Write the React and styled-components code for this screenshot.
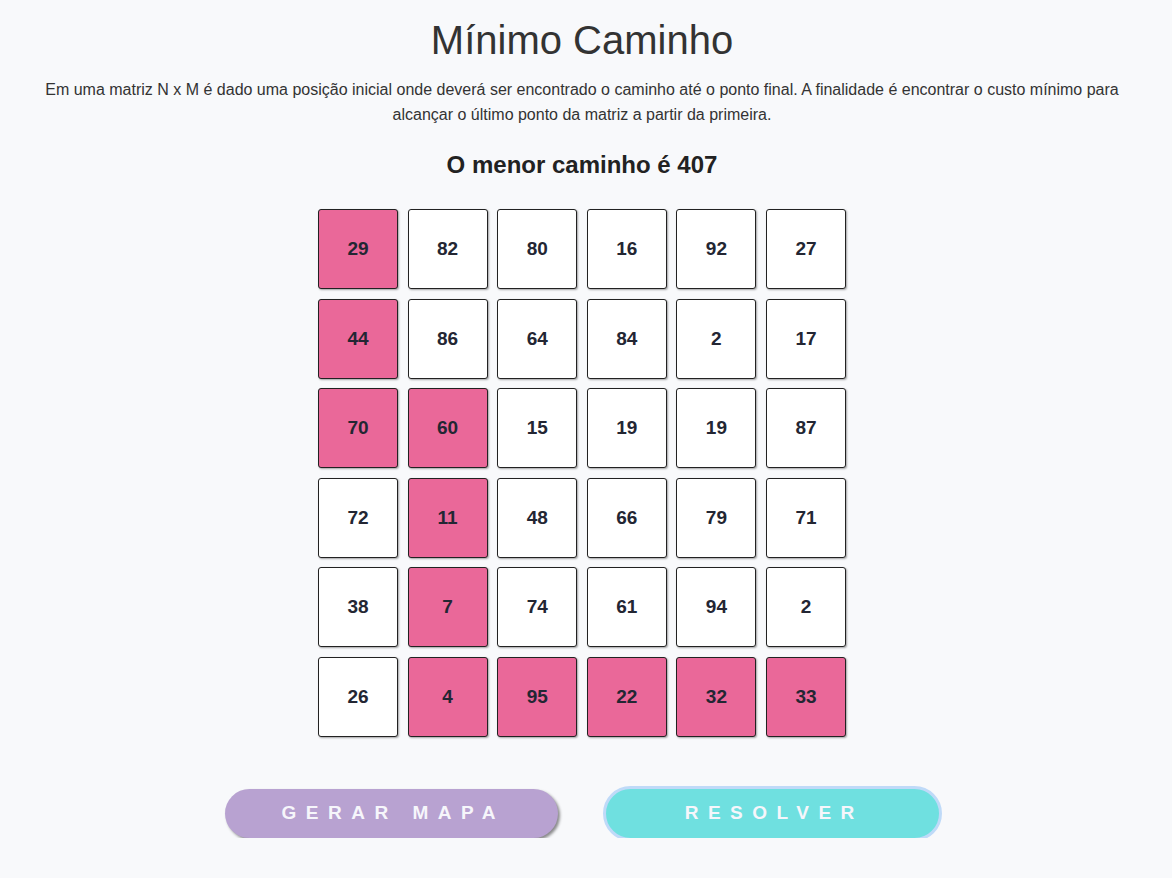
import React from 'react';
import styled, { createGlobalStyle } from 'styled-components';

const GlobalStyle = createGlobalStyle`
  html, body {
    margin: 0;
    padding: 0;
    background-color: #f8f9fb;
  }
  body {
    font-family: 'Liberation Sans', Arial, sans-serif;
    color: #333;
  }
`;

const Page = styled.div`
  width: 1164px;
  display: flex;
  flex-direction: column;
  align-items: center;
  padding-top: 14px;
`;

const Title = styled.h1`
  font-size: 40px;
  font-weight: 400;
  color: #333;
  margin: 0;
  line-height: 52px;
`;

const Description = styled.p`
  font-size: 16px;
  line-height: 25px;
  color: #333;
  text-align: center;
  margin: 11px 0 0;
  padding: 0 40px;
`;

const Result = styled.h2`
  font-size: 24px;
  font-weight: 700;
  color: #222;
  margin: 23px 0 0;
  line-height: 30px;
`;

const Grid = styled.div`
  display: grid;
  grid-template-columns: repeat(6, 80px);
  gap: 9.6px;
  margin-top: 29px;
`;

const Cell = styled.div`
  box-sizing: border-box;
  width: 80px;
  height: 80px;
  display: flex;
  align-items: center;
  justify-content: center;
  border: 1px solid #222;
  border-radius: 3px;
  background-color: ${(props) => (props.$path ? '#ea6899' : '#fff')};
  box-shadow: 1px 1px 2px rgba(0, 0, 0, 0.35);
  font-size: 19px;
  font-weight: 700;
  color: #232633;
`;

const Actions = styled.div`
  display: flex;
  gap: 48px;
  margin-top: 52px;
`;

const Button = styled.button`
  box-sizing: border-box;
  width: ${(props) => (props.$focused ? '339px' : '333px')};
  height: ${(props) => (props.$focused ? '55px' : '49px')};
  margin: ${(props) => (props.$focused ? '-3px' : '0')};
  border-radius: 30px;
  border: ${(props) => (props.$focused ? '3px solid #bfdaf8' : 'none')};
  background-color: ${(props) => props.$bg};
  box-shadow: ${(props) => (props.$focused ? 'none' : '2px 2px 3px rgba(0, 0, 0, 0.45)')};
  color: #f6f6fb;
  font-family: 'Liberation Sans', Arial, sans-serif;
  font-size: 19px;
  font-weight: 700;
  letter-spacing: 0.5em;
  padding-left: 0.5em;
  cursor: pointer;
`;

const matrix = [
  [29, 82, 80, 16, 92, 27],
  [44, 86, 64, 84, 2, 17],
  [70, 60, 15, 19, 19, 87],
  [72, 11, 48, 66, 79, 71],
  [38, 7, 74, 61, 94, 2],
  [26, 4, 95, 22, 32, 33],
];

const path = new Set(['0-0', '1-0', '2-0', '2-1', '3-1', '4-1', '5-1', '5-2', '5-3', '5-4', '5-5']);

const App = () => {
  const total = 407;

  return (
    <>
      <GlobalStyle />
      <Page>
        <Title>Mínimo Caminho</Title>
        <Description>
          Em uma matriz N x M é dado uma posição inicial onde deverá ser encontrado o caminho até o ponto final. A finalidade é encontrar o custo mínimo para alcançar o último ponto da matriz a partir da primeira.
        </Description>
        <Result>O menor caminho é {total}</Result>
        <Grid>
          {matrix.map((row, i) =>
            row.map((value, j) => (
              <Cell key={`${i}-${j}`} $path={path.has(`${i}-${j}`)}>
                {value}
              </Cell>
            ))
          )}
        </Grid>
        <Actions>
          <Button $bg="#b8a2d1">GERAR MAPA</Button>
          <Button $bg="#6fe0e0" $focused>RESOLVER</Button>
        </Actions>
      </Page>
    </>
  );
};

export default App;
